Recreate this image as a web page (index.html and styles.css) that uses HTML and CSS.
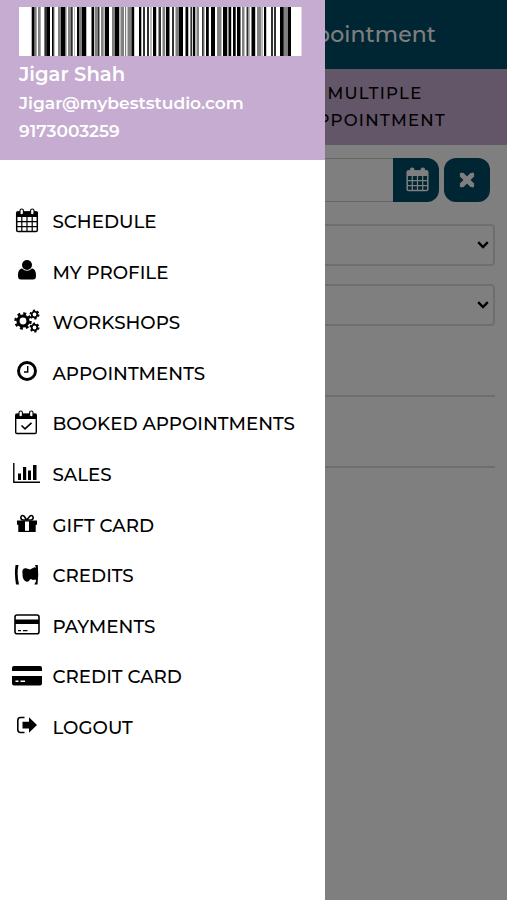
FILE: index.html
```html
<!DOCTYPE html>
<html lang="en">
<head>
<meta charset="utf-8">
<title>Appointment</title>
<link rel="stylesheet" href="styles.css">
</head>
<body>
<svg class="defs" aria-hidden="true">
  <symbol id="calendar" viewBox="0 0 24 26">
    <rect x="1.7" y="4" width="20.6" height="19.5" rx="1.3" fill="none" stroke="currentColor" stroke-width="1.5"/>
    <path fill="currentColor" d="M1.5 3.5h21V9h-21z"/>
    <path fill="none" stroke="currentColor" stroke-width="1.2" d="M6.8 8v15.500M12 8v15.500M17.200 8v15.500M2 13.700h20M2 18.600h20"/>
    <rect class="ring" x="5" y="1" width="3.400" height="5.800" rx="1.600"/>
    <rect class="ring" x="15.600" y="1" width="3.400" height="5.800" rx="1.600"/>
  </symbol>
</svg>

<main class="page">
  <header class="topbar"><h1>Appointment</h1></header>
  <nav class="tabs"><span class="tab">MULTIPLE<br>APPOINTMENT</span></nav>
  <section class="form">
    <div class="date-row">
      <div class="date-input"></div>
      <button class="btn btn-date" aria-label="Pick date"><svg width="25" height="26"><use href="#calendar"/></svg></button>
      <button class="btn btn-clear" aria-label="Clear"><svg width="18" height="18" viewBox="0 0 18 18"><path d="M3.500 3.500l11 11M14.500 3.500l-11 11" stroke="currentColor" stroke-width="5.200"/><path d="M3.500 3.500l11 11M14.500 3.500l-11 11" stroke="currentColor" stroke-width="3.600" stroke-linecap="round"/></svg></button>
    </div>
    <div class="select"><svg width="12" height="8" viewBox="0 0 12 8"><path d="M1.200 1.200L6 6l4.800-4.800" fill="none" stroke="#000" stroke-width="2.400"/></svg></div>
    <div class="select"><svg width="12" height="8" viewBox="0 0 12 8"><path d="M1.200 1.200L6 6l4.800-4.800" fill="none" stroke="#000" stroke-width="2.400"/></svg></div>
    <hr class="rule rule-first">
    <hr class="rule">
  </section>
</main>

<div class="overlay"></div>

<aside class="drawer">
  <div class="profile">
    <svg class="barcode" width="283" height="49" viewBox="19 7 283 49">
      <path fill="#fff" d="M19 7h282.500v49H19z"/>
      <path fill="#bbb" d="M40 7h1v49h-1zM54 7h1v49h-1zM66 7h1v49h-1zM74 7h1v49h-1zM86 7h1v49h-1zM104 7h1v49h-1zM120 7h1v49h-1zM150 7h2v49h-2zM162 7h1v49h-1zM175 7h1v49h-1zM188 7h1v49h-1zM204 7h1v49h-1zM227 7h1v49h-1zM249 7h1v49h-1zM262 7h1v49h-1z"/>
      <path fill="#808080" d="M34 7h2.700v49H34zM38 7h2.300v49H38zM44 7h3v49h-3zM58 7h3v49h-3zM68 7h4v49h-4zM79 7h3v49h-3zM95 7h3v49h-3zM101 7h2.700v49H101zM112 7h3v49h-3zM121 7h3v49h-3zM125 7h1.200v49H125zM127.500 7h4v49h-4zM163 7h2.200v49H163zM176 7h3v49h-3zM190 7h1.500v49H190zM196.500 7h2.500v49h-2.500zM217 7h4.500v49H217zM242 7h2.500v49H242zM257 7h4.500v49H257zM283 7h5v49h-5z"/>
      <path fill="#303030" d="M45 7h2v49h-2zM71 7h1.700v49H71zM98 7h1.500v49H98zM143 7h2v49h-2zM147 7h2v49h-2zM158.500 7h2.500v49h-2.500zM172 7h2v49h-2zM191 7h1.200v49H191zM202 7h1.700v49H202zM246.500 7h2v49h-2zM271 7h2v49h-2zM274 7h2v49h-2z"/>
      <path fill="#000" d="M31.700 7h2.500v49h-2.500zM47 7h3v49h-3zM52 7h1.700v49H52zM61 7h4.500v49H61zM77 7h2v49h-2zM82 7h4v49h-4zM91.500 7h2.700v49h-2.700zM105 7h4v49h-4zM115 7h4.300v49H115zM131.500 7h2.700v49h-2.700zM139 7h2.300v49H139zM153 7h3.200v49H153zM166 7h3.500v49H166zM179 7h4v49h-4zM185.500 7h2.500v49h-2.500zM193 7h2.300v49H193zM206 7h2.800v49H206zM211 7h4v49h-4zM223 7h4v49h-4zM228.500 7h2.700v49h-2.700zM233 7h2.700v49H233zM237 7h3.500v49H237zM251.500 7h3.700v49h-3.700zM264 7h2.200v49H264zM280 7h3.500v49H280zM288 7h3v49h-3z"/>
    </svg>
    <div class="name">Jigar Shah</div>
    <div class="email">Jigar@mybeststudio.com</div>
    <div class="phone">9173003259</div>
  </div>
  <ul class="menu">
    <li><svg width="24" height="26"><use href="#calendar"/></svg><span>SCHEDULE</span></li>
    <li><svg class="lift" width="20" height="22" viewBox="0 0 20 22"><circle cx="10" cy="6" r="5"/><path d="M5 9.500q5 4.500 10 0c3.500.5 4 4 4 7.500 0 2.500-1 3.500-3 3.500H4c-2 0-3-1-3-3.500 0-3.500.5-7 4-7.500z"/></svg><span>MY PROFILE</span></li>
    <li><svg class="lift" width="26" height="24" viewBox="0 0 26 24">
      <g fill="none" stroke="#000"><circle cx="9" cy="12" r="5" stroke-width="3.200"/><circle cx="9" cy="12" r="7.500" stroke-width="2.500" stroke-dasharray="2.950 2.940"/><circle cx="20.500" cy="5.500" r="2.800" stroke-width="1.800"/><circle cx="20.500" cy="5.500" r="4.200" stroke-width="1.600" stroke-dasharray="2.200 2.198"/><circle cx="20.500" cy="18.500" r="2.800" stroke-width="1.800"/><circle cx="20.500" cy="18.500" r="4.200" stroke-width="1.600" stroke-dasharray="2.200 2.198"/></g></svg><span>WORKSHOPS</span></li>
    <li><svg width="20" height="22" viewBox="0 0 20 22"><circle cx="10" cy="10" r="8.500" fill="none" stroke="#000" stroke-width="2.900"/><path d="M10.700 5v6H7" fill="none" stroke="#000" stroke-width="1.400"/></svg><span>APPOINTMENTS</span></li>
    <li><svg class="calendar-check" width="24" height="26" viewBox="0 0 24 26"><rect x="1.700" y="4.500" width="20.600" height="19" rx="1.300" fill="none" stroke="#000" stroke-width="1.400"/><path d="M1.500 3.500h21V9h-21z"/><rect class="ring" x="5" y="1" width="3.400" height="5.800" rx="1.600"/><rect class="ring" x="15.600" y="1" width="3.400" height="5.800" rx="1.600"/><path d="M7.500 15.500l3.500 3.300 6.500-6" fill="none" stroke="#000" stroke-width="1.600"/></svg><span>BOOKED APPOINTMENTS</span></li>
    <li><svg class="lift" width="27" height="22" viewBox="0 0 27 22"><path d="M.8 1v19.200H27" fill="none" stroke="#000" stroke-width="1.400"/><path d="M5 11.500h3V18H5zM10 5h3.200v13H10zM15 8.500h3V18h-3zM20 3h3.500v15H20z"/></svg><span>SALES</span></li>
    <li><svg width="20" height="22" viewBox="0 0 20 22"><path d="M0 7.500h20v4.300h-1.300V19H1.300v-7.200H0z"/><path d="M8 8.500h4v9.300H8z" fill="#fff"/><path d="M9.700 7L7 3Q4.500 1.500 3.800 4.500 4 7 6 7h8q2 0 2.200-2.500Q15.500 1.500 13 3z" fill="none" stroke="#000" stroke-width="1.600"/></svg><span>GIFT CARD</span></li>
    <li><svg width="25" height="22" viewBox="0 0 25 22"><path d="M1.500 1H4.500Q2.500 10 5 20.500H2Q.2 10 1.500 1zM21 1h2.800q1 10-.3 19.500h-3.300l2-3.500-.7-1.500-2.500.5-2-1-1 .5q-1.500 3-4 2Q8.500 16 8.500 10q-1-6 3.500-5.700l4 1.200 4.500-2.200 1.500.5z"/></svg><span>CREDITS</span></li>
    <li><svg width="26" height="22" viewBox="0 0 26 22"><rect x="1" y="1" width="24" height="18.800" rx="2" fill="none" stroke="#000" stroke-width="1.600"/><path d="M1 5.500h24v4.500H1zM4 16h3v1.300H4zM9 16h4.500v1.300H9z"/></svg><span>PAYMENTS</span></li>
    <li><svg width="30" height="22" viewBox="0 0 30 22"><path d="M0 6V3Q0 1 2 1h26q2 0 2 2v3zM0 11h30v7.500q0 2-2 2H2q-2 0-2-2z"/><path d="M3.500 15.500h3v1.500h-3zM8.500 15.500h4.500v1.500H8.500z" fill="#fff"/></svg><span>CREDIT CARD</span></li>
    <li><svg width="20" height="22" viewBox="0 0 20 22"><path d="M7.500 2.500H3.500Q.8 2.500.8 5.500v9q0 3 2.700 3h4" fill="none" stroke="#000" stroke-width="1.600"/><path d="M5.500 6.700H12V2.300L20 10l-8 7.700V13.500H5.500z"/></svg><span>LOGOUT</span></li>
  </ul>
</aside>
</body>
</html>
```
FILE: styles.css
```css
* { box-sizing: border-box; }
body {
  margin: 0;
  height: 900px;
  overflow: hidden;
  position: relative;
  background: #fff;
  color: #000;
  font-family: "Montserrat", "Inter", sans-serif;
}
.defs { position: absolute; width: 0; height: 0; }
.ring { fill: #fff; stroke: currentColor; stroke-width: 1.1; }

.topbar {
  height: 69px;
  display: flex;
  align-items: center;
  justify-content: flex-end;
  padding-right: 71px;
  background: #004a66;
  color: #fff;
}
.topbar h1 { margin: 0 0 1px; font-size: 22px; font-weight: 500; letter-spacing: .1px; }
.tabs {
  height: 76px;
  display: flex;
  align-items: center;
  justify-content: flex-end;
  padding-right: 59px;
  background: #c5acd0;
}
.tab { width: 146px; text-align: center; font-size: 16.500px; font-weight: 500; line-height: 27px; letter-spacing: 1.300px; }
.form { padding: 13px 12px 0; }
.date-row { display: flex; height: 44px; padding-right: 5px; margin-bottom: 22px; }
.date-input { flex: 1; border: 1px solid #ccc; border-right: 0; }
.btn {
  display: flex;
  align-items: center;
  justify-content: center;
  width: 46px;
  padding: 0;
  border: 0;
  background: #004a66;
  color: #fff;
}
.btn-date { border-radius: 0 12px 12px 0; padding-left: 2px; }
.btn-date .ring { fill: #004a66; }
.btn-clear { margin-left: 5px; border-radius: 12px; }
.select {
  height: 42px;
  display: flex;
  align-items: center;
  justify-content: flex-end;
  margin-bottom: 18px;
  padding-right: 4px;
  border: 2px solid #dcdcdc;
  border-radius: 4px;
}
.rule { margin: 0; border: 0; border-top: 2px solid #dcdcdc; }
.rule-first { margin: 69px 0; }

.overlay { position: absolute; inset: 0; background: rgba(0, 0, 0, .5); }

.drawer { position: absolute; left: 0; top: 0; width: 325px; height: 900px; background: #fff; }
.profile { height: 160px; padding: 7px 19px 0; background: #c5acd0; color: #fff; font-weight: 600; white-space: nowrap; }
.barcode { display: block; margin-bottom: 4px; }
.name { font-size: 19.600px; line-height: 28px; }
.email { font-size: 17.100px; line-height: 29px; }
.phone { font-size: 17.100px; line-height: 28px; }

.menu { list-style: none; margin: 0; padding: 37px 0 0; }
.menu li { display: grid; grid-template-columns: 53.500px 1fr; align-items: center; height: 50.550px; }
.menu svg { justify-self: center; margin-top: -3px; }
.menu .lift { margin-top: -5px; }
.menu .calendar-check { margin-right: 2px; }
.menu span { justify-self: start; margin-left: -1px; font-size: 18.270px; font-weight: 500; line-height: 24px; white-space: nowrap; }
```
